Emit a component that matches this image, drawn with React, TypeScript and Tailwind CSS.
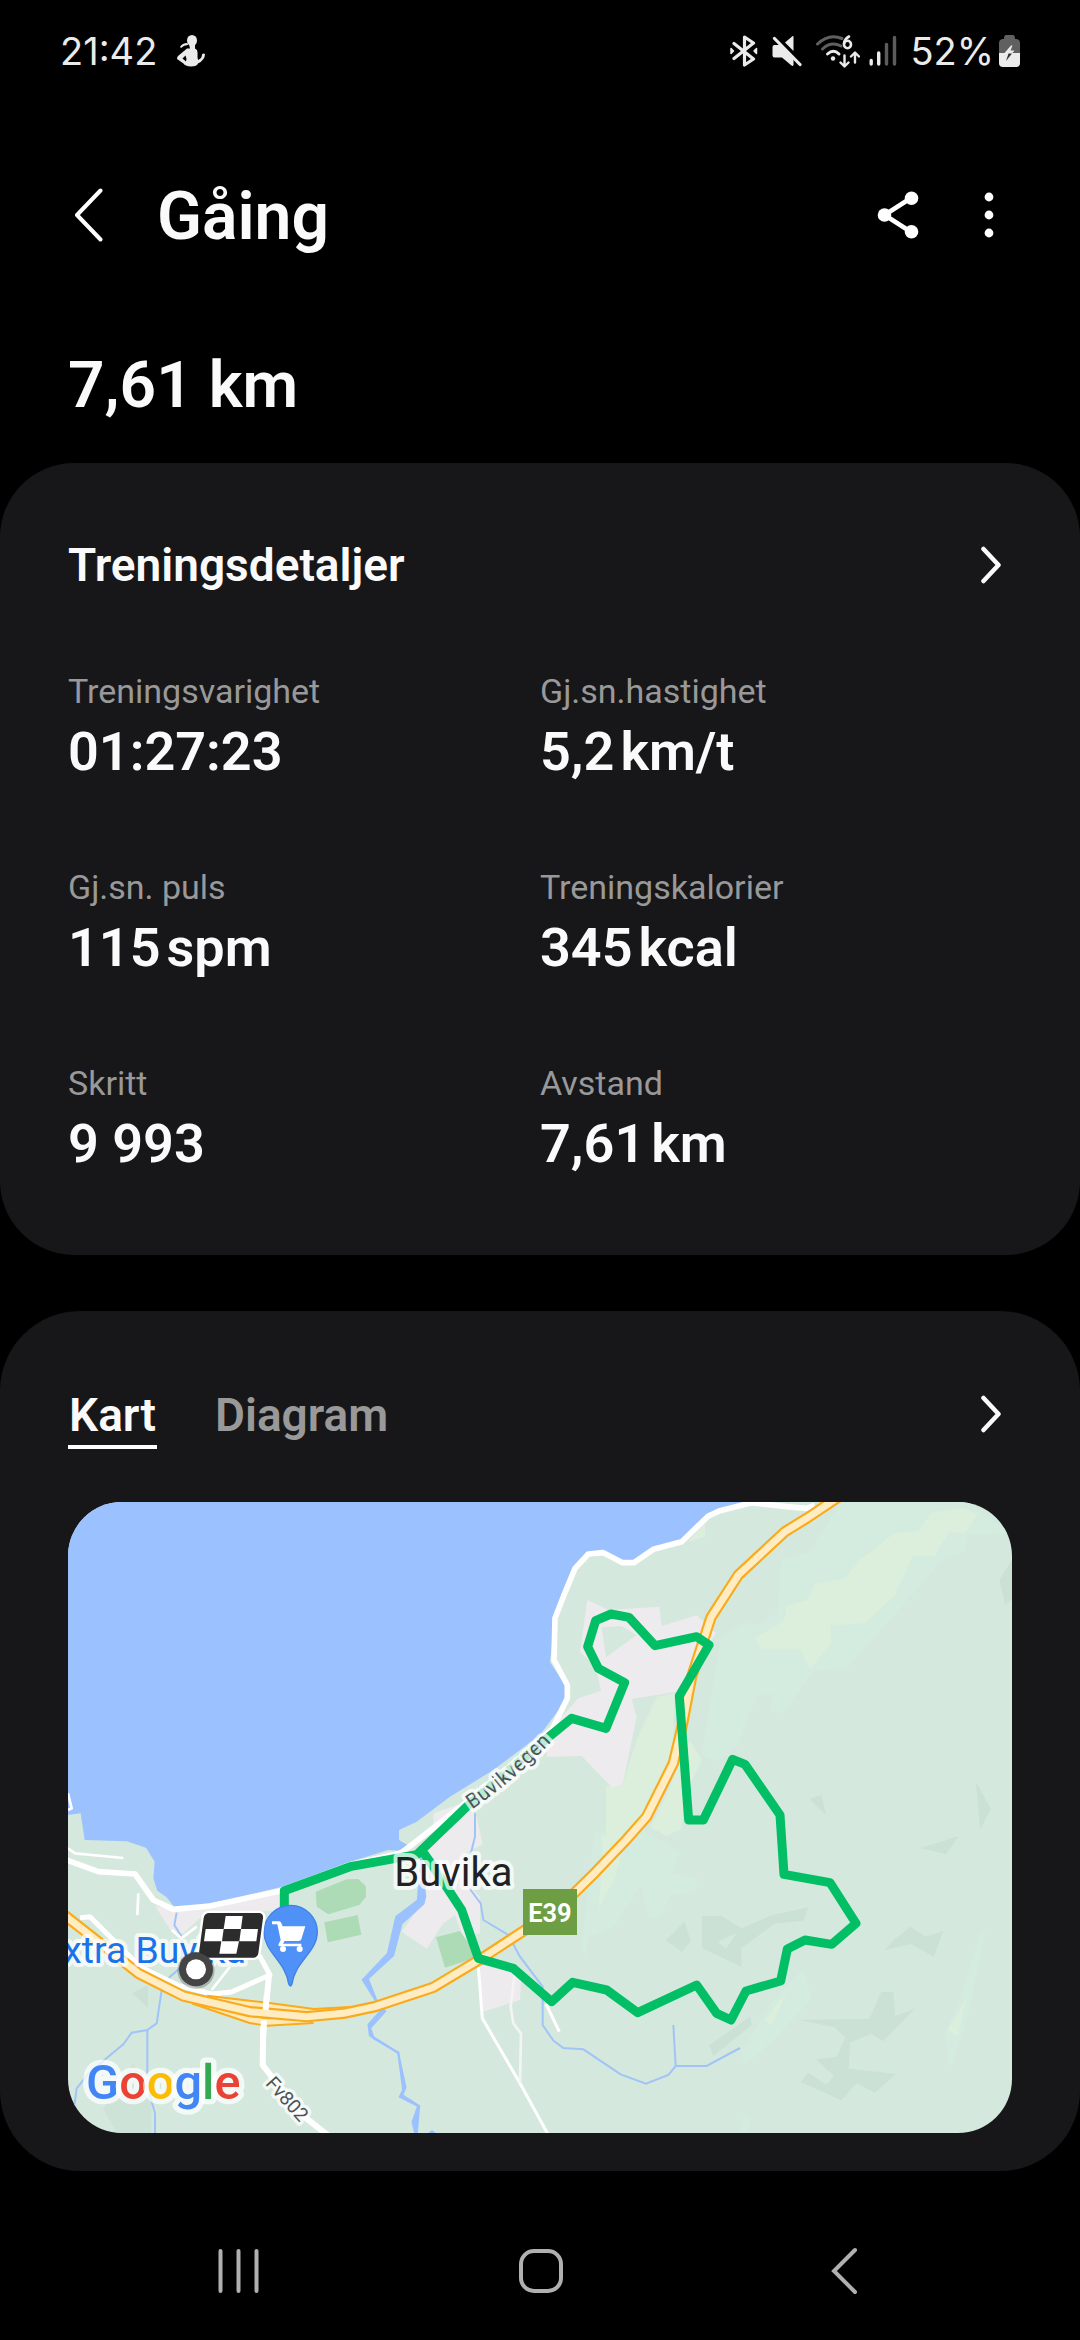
import { useState } from "react";

type Stat = { label: string; value: string; unit?: string };

const stats: Stat[] = [
  { label: "Treningsvarighet", value: "01:27:23" },
  { label: "Gj.sn.hastighet", value: "5,2", unit: "km/t" },
  { label: "Gj.sn. puls", value: "115", unit: "spm" },
  { label: "Treningskalorier", value: "345", unit: "kcal" },
  { label: "Skritt", value: "9 993" },
  { label: "Avstand", value: "7,61", unit: "km" },
];

const tabs = ["Kart", "Diagram"];

function StatusBar() {
  return (
    <div className="flex h-[102px] items-center justify-between px-[60px] font-['Inter',sans-serif] text-[38px] text-[#ebebeb]">
      <div className="flex items-center gap-5">
        <span>21:42</span>
        <svg width="28" height="32" viewBox="0 0 28 32" fill="#ebebeb">
          <ellipse cx="15" cy="5.500" rx="5" ry="5.500" />
          <path d="M3 12 Q5 8 10.500 8 L11 10 Q7 10 4 13Z" />
          <path
            fillRule="evenodd"
            d="M12 9h6v4.500l2 1.500q1 3 .5 7l.5 3q4-1.500 4-5.500 1-1.500 3-.5 0 6-7 9.500-1 3-7 3-6-.5-7.500-3L0 24q0-2 1-3l9-7.500h3zM5.500 23.500l3.500 3q1-3-.5-6z"
          />
        </svg>
      </div>

      <div className="flex items-center">
        {/* Bluetooth */}
        <svg width="28" height="32" viewBox="0 0 28 32" fill="none" stroke="#ebebeb" strokeWidth="3.200" strokeLinejoin="round" strokeLinecap="round">
          <path d="M4 8.500 L23.500 24 L14.500 30 V2 L23.500 8 L4 23.500" />
          <path d="M1 13.500v5l2.500-2.500zM26.500 13.500v5L24 16z" fill="#ebebeb" strokeWidth="1.500" />
        </svg>
        {/* Sound off */}
        <svg className="ml-[14px]" width="30" height="32" viewBox="0 0 30 32" fill="#ebebeb">
          <path d="M21.500 1.500V16L13 7.500 19.500 2Q21 .5 21.500 1.500z" />
          <path d="M2.500 10H8l13.500 14v6q-.5 1.500-2 .5L10 22.500H2.500Q.5 22.500.5 20.500V12q0-2 2-2z" />
          <path d="M6 3 L29 26" stroke="#000" strokeWidth="2" />
          <path d="M2.500 3.500 L28 29.500" stroke="#ebebeb" strokeWidth="3.200" strokeLinecap="round" />
        </svg>
        {/* Wi-Fi 6 */}
        <svg className="ml-[14px]" width="44" height="33" viewBox="0 0 44 33" fill="none" strokeLinecap="round">
          <path d="M1.500 9 Q13 -2 26 3.500" stroke="#606060" strokeWidth="3" />
          <path d="M6.500 14 Q15 6 25 11" stroke="#606060" strokeWidth="3" />
          <path d="M11.500 19 Q17.500 13.500 23 19" stroke="#ebebeb" strokeWidth="3" />
          <circle cx="17" cy="23.500" r="2.200" fill="#ebebeb" />
          <ellipse cx="31.500" cy="9.500" rx="3.500" ry="3.700" stroke="#ebebeb" strokeWidth="2.600" />
          <path d="M33 1.500 Q28.500 4 28 8.500" stroke="#ebebeb" strokeWidth="2.600" />
          <path d="M28.500 20.500v10M24.500 27.500l4 4 4-4M39 27.500V18M35 21.500l4-4 4 4" stroke="#ebebeb" strokeWidth="2.400" strokeLinejoin="round" />
        </svg>
        {/* Mobile signal */}
        <svg className="ml-[9px]" width="28" height="32" viewBox="0 0 28 32" strokeWidth="3.400" strokeLinecap="round">
          <path d="M2.200 25.500v3.500M9.700 18v11" stroke="#ebebeb" />
          <path d="M17.500 9.500V29M25.500 2.500V29" stroke="#5c5c5c" />
        </svg>
        <span className="ml-[13px]">52%</span>
        <svg className="ml-[5px]" width="21" height="32" viewBox="0 0 21 32">
          <path d="M7 0h7q2 0 2 4h1.500Q21 4.500 21 8v11H0V8q0-3.500 3.500-4H5q0-4 2-4z" fill="#606060" />
          <path d="M0 18h21v10q0 4-4 4H4q-4 0-4-4z" fill="#ebebeb" />
          <path d="M12 10.500 L5.500 18H10L7 25.500 15.500 15.500H11.500L13.500 10.500z" fill="#ebebeb" />
          <path d="M9.500 18.500H13L7 26z" fill="#333" />
        </svg>
      </div>
    </div>
  );
}

function ChevronRight() {
  return (
    <svg width="20" height="38" viewBox="0 0 20 38" fill="none" stroke="#fafafa" strokeWidth="4.500" strokeLinecap="round" strokeLinejoin="round">
      <path d="M2.500 3 L17.500 19 L2.500 35" />
    </svg>
  );
}

const ROUTE =
  "M649 1225 V1166 L846 1094 L1046 1058 L1196 914 L1300 825 L1446 702 L1511 649 L1614 679 L1670 542 L1591 499 L1559 434 L1583 356 L1629 336 L1683 346 L1761 431 L1886 404 L1923 429 L1834 582 L1862 954 L1906 954 L1994 772 L2031 787 L2136 939 L2148 1117 L2286 1142 L2364 1264 L2291 1327 L2211 1314 L2158 1341 L2138 1437 L2034 1467 L1989 1554 L1946 1534 L1886 1449 L1709 1532 L1616 1464 L1514 1441 L1451 1499 L1336 1399 L1231 1369 L1181 1224 L1096 1094 L1061 1044";

const HIGHWAY =
  "M2310 -14 L2216 49 L2151 89 L2011 219 L1929 346 L1871 524 L1841 679 L1816 784 L1736 944 L1676 1012 L1581 1112 L1516 1176 L1371 1284 L1241 1369 L1096 1456 L921 1514 L826 1534 L716 1544 L546 1529 L346 1482 L211 1414 L91 1319 L-10 1240";

const RAMPS =
  "M376 1494 L546 1552 L596 1560 L736 1552 M416 1492 L586 1512 L736 1532 L846 1526";

function RouteMap() {
  return (
    <svg viewBox="0 0 2832 1893" className="block h-auto w-full rounded-[54px]" role="img" aria-label="Kart over turen">
      <rect width="2832" height="1893" fill="#d5e8dd" />

      {/* Terrain */}
      <g fill="#d4ebdf">
        <path d="M2320 0 H2700 L2832 95 L2700 100 L2690 150 L2636 160 L2341 495 L2236 509 L2146 634 L2106 624 L2116 574 L2066 584 L2006 734 L1950 780 L1900 760 L1960 400 L2030 360 L2070 370 L2130 330 L2140 170 L2220 150 L2250 110 Z" />
        <path d="M1580 990 L1720 980 L1840 1050 L1810 1110 L1890 1130 L1880 1170 L1810 1180 L1770 1250 L1740 1245 L1720 1150 L1640 1270 L1560 1310 L1555 1370 L1540 1330 Z" />
        <path d="M2200 1404 L2215 1430 L2230 1490 L2110 1620 L2030 1690 L2020 1650 L2110 1500 Z" />
        <path d="M2740 1280 L2752 1290 L2700 1540 L2645 1705 L2630 1600 L2690 1450 Z" />
        <path d="M2030 1830 L2048 1870 L2035 1893 H2015 Z" />
      </g>
      <g fill="#dceedc">
        <path d="M2686 17 L2731 37 L2691 92 L2643 92 L2599 162 L2534 162 L2481 279 L2391 364 L2286 371 L2291 424 L2226 501 L2196 442 L2076 442 L2061 407 L2146 359 L2156 312 L2218 294 L2241 244 L2326 232 L2376 174 L2478 94 L2551 86 L2589 32 Z" />
        <path d="M1706 714 L1766 584 L1820 574 L1814 760 L1740 900 L1740 940 L1676 1000 L1640 1130 L1591 1224 L1605 1060 L1600 1005 L1614 1000 V854 L1664 846 Z" />
        <path d="M1866 714 L1901 774 L1850 880 L1841 980 L1796 1002 L1746 975 L1790 890 Z" />
        <path d="M1911 90 V64 L1860 120 L1914 103 Z" />
        <path d="M2157 1465 L2120 1555 L2108 1570 L2092 1552 Z M2695 1490 L2668 1605 L2638 1582 Z" />
      </g>
      <g fill="#cbe1d5">
        <path d="M1902 1242 H1960 L2022 1279 L2110 1240 L2222 1216 L2206 1256 L2120 1265 L2020 1338 V1394 L1902 1338 Z" />
        <path d="M1850 1258 L1868 1318 L1842 1350 L1794 1315 Z" />
        <path d="M2558 1038 L2672 1002 L2634 1057 Z M2528 1274 L2572 1304 L2626 1288 L2598 1364 L2528 1326 L2450 1344 L2480 1312 Z" />
        <path d="M2440 1469 H2476 L2482 1542 L2540 1520 L2446 1618 L2410 1595 L2346 1622 L2342 1700 L2484 1716 L2420 1772 L2366 1744 L2320 1795 L2198 1740 L2220 1712 L2274 1748 L2298 1722 L2244 1672 L2306 1664 L2332 1606 L2300 1576 L2192 1554 L2404 1550 Z" />
        <path d="M2832 174 L2794 234 L2812 308 L2832 290 Z M2724 840 L2769 920 L2736 984 Z M2224 890 L2260 880 L2274 938 Z" />
        <path d="M2046 1544 L2052 1568 L1936 1662 L1924 1630 Z M192 1474 L240 1450 V1518 Z" />
        <path d="M195 1684 L250 1760 V1893 H146 L106 1820 L160 1740 Z" opacity=".7" />
      </g>
      <path d="M2006 1293 L1974 1340 L1948 1320 Z" fill="#d5e8dd" />

      {/* Water */}
      <path
        d="M0 0 H2040 L1956 26 L1921 42 L1841 119 L1756 142 L1698 182 L1664 182 L1606 152 L1561 156 L1521 199 L1486 284 L1461 349 L1446 480 L1498 560 V589 L1416 699 L1276 804 L1146 884 L1046 959 L993 984 V1014 L1018 1029 L991 1046 L961 1044 L846 1079 L636 1156 L426 1206 L318 1214 L296 1186 L268 1166 L256 1129 L260 1079 L234 1037 L176 1018 L50 1014 L38 934 L0 939 Z"
        fill="#9bc1ff"
      />

      {/* Built-up areas */}
      <g fill="#eeebee">
        <path d="M1558 294 L1621 324 L1774 314 L1781 372 L1886 340 L1944 394 L1826 569 L1691 591 L1706 644 L1664 846 L1631 856 L1541 762 L1436 764 L1451 679 L1531 589 L1599 566 L1583 494 L1536 449 Z" />
        <path d="M261 1212 L318 1224 L636 1164 V1224 L406 1239 L346 1294 L311 1289 Z" />
        <path d="M1096 934 L1196 899 L1226 944 L1244 1027 L1180 1060 L1200 1150 L1236 1184 V1294 L1186 1309 L1161 1239 L1126 1264 L1076 1340 L1001 1289 L1076 1184 L1066 1044 L1096 994 Z" />
        <path d="M1226 1389 L1361 1404 L1356 1494 L1246 1529 Z" />
      </g>
      <path d="M1601 376 L1660 372 L1706 399 L1614 466 Z" fill="#d5e8dd" />
      <g fill="#addbb6">
        <path d="M743 1169 L836 1132 L871 1131 L893 1152 L894 1184 L874 1209 L781 1237 L746 1214 Z" />
        <path d="M769 1261 L869 1239 L880 1298 L779 1321 Z" />
        <path d="M1104 1306 L1176 1287 L1231 1364 L1131 1397 Z" />
      </g>

      {/* Streams */}
      <g fill="none" stroke="#a1c4f7" strokeWidth="6">
        <path d="M1221 934 V1004 L1206 1064 L1208 1164 L1238 1204 L1246 1254 L1321 1299 L1356 1364 L1424 1454 V1569 L1456 1616 L1486 1638 L1546 1642 L1658 1717 L1734 1745 L1801 1719 L1823 1692 H1916 L2016 1638 M1816 1569 L1823 1692" />
        <path d="M326 1232 L319 1269 L341 1304 V1394 L306 1424 L281 1464 L266 1564 L238 1584 L191 1592 L166 1627 L66 1709 L26 1759 L16 1834 M238 1584 V1754 L261 1834 V1893" />
      </g>
      <path
        d="M1060 1060 L1071 1184 L1066 1205 L1000 1265 L975 1360 L899 1430 L926 1498 L951 1528 L906 1578 L916 1608 L991 1652 L1006 1764 L996 1784 L1051 1812 L1034 1860 L1042 1893 H1046 L1053 1812 L1002 1780 L1012 1756 L990 1652 L906 1600 L902 1568 L941 1524 L885 1434 L960 1355 L985 1245 L1050 1195 Z"
        fill="#9bc1ff"
        stroke="#9bc1ff"
        strokeWidth="7"
      />
      <path d="M1080 1893 L1092 1884 L1104 1893 Z" fill="#9bc1ff" />

      {/* Local roads */}
      <g fill="none" stroke="#fff" strokeLinejoin="round">
        <path
          d="M2240 10 L2216 19 L2156 14 L2051 2 L1956 26 L1921 42 L1841 119 L1756 142 L1698 182 L1664 182 L1606 152 L1561 156 L1521 199 L1486 284 L1461 349 L1458 474 L1498 549 V589 L1454 679 L1300 818 L1196 900 L1001 1052 L846 1088 L636 1167 L426 1212 L316 1222 L256 1194 L201 1116 L91 1109 L-10 1072"
          strokeWidth="17"
        />
        <path d="M574 1360 L606 1419 L490 1470 L431 1476 L330 1450 L216 1394 L141 1319 L66 1244 L36 1247" strokeWidth="15" />
        <path d="M603 1419 L594 1514 L586 1564 L584 1689 L611 1724 L696 1834 L780 1900" strokeWidth="18" />
        <path d="M486 1394 L431 1464 M311 1284 L340 1309 L386 1274 M211 1174 L208 1239 M0 1039 L21 1054 L166 1068 M0 874 L11 919 L0 924" strokeWidth="8" />
        <path d="M1231 1395 L1243 1549 L1356 1744 L1440 1897 M1434 1506 L1474 1589" strokeWidth="9" />
        <path d="M1341 1410 L1328 1514 L1336 1564 L1359 1594 L1356 1744" stroke="#f4f4f4" strokeWidth="8" />
      </g>

      {/* E39 */}
      <g fill="none" strokeLinejoin="round">
        <path d={RAMPS} stroke="#f9ab1c" strokeWidth="28" />
        <path d={RAMPS} stroke="#ffe9b8" strokeWidth="16" />
        <path d={HIGHWAY} stroke="#f9ab1c" strokeWidth="34" />
        <path d={HIGHWAY} stroke="#ffecc2" strokeWidth="21" />
        <path d="M596 1480 L593 1524 M588 1555 L586 1600" stroke="#fff" strokeWidth="18" />
      </g>

      <path d={ROUTE} fill="none" stroke="#02bf66" strokeWidth="27" strokeLinejoin="round" />

      {/* Labels */}
      <defs>
        <path id="buvikvegen" d="M1212 922 Q1350 830 1478 690" />
      </defs>
      <g className="font-['Roboto',sans-serif]" stroke="#fff" strokeOpacity=".72" strokeLinejoin="round" style={{ paintOrder: "stroke" }}>
        <text fontSize="62" fill="#4c5358" strokeWidth="22">
          <textPath href="#buvikvegen">Buvikvegen</textPath>
        </text>
        <text fontSize="58" fill="#4c5358" strokeWidth="20" transform="translate(590 1746) rotate(48)">
          Fv802
        </text>
        <text x="979" y="1152" fontSize="120" fill="#1f2124" strokeWidth="24">
          Buvika
        </text>
        <text x="-14" y="1384" fontSize="112" fill="#1a73e8" strokeWidth="24">
          xtra Buvika
        </text>
        <text x="54" y="1791" fontSize="146" fontWeight="500" strokeWidth="32">
          <tspan fill="#4285f4">G</tspan>
          <tspan fill="#ea4335">o</tspan>
          <tspan fill="#fbbc05">o</tspan>
          <tspan fill="#4285f4">g</tspan>
          <tspan fill="#34a853">l</tspan>
          <tspan fill="#ea4335">e</tspan>
        </text>
      </g>
      <rect x="1365" y="1161" width="162" height="138" fill="#6d9e43" />
      <text x="1446" y="1260" fontSize="76" fontWeight="700" fill="#fff" textAnchor="middle" className="font-['Roboto',sans-serif]">
        E39
      </text>

      {/* Shop pin */}
      <path
        d="M668 1210 a80 80 0 0 1 80 80 C748 1350 680 1380 672 1446 Q668 1458 662 1446 C654 1380 588 1350 588 1290 a80 80 0 0 1 80-80z"
        fill="#4f91f6"
        stroke="#3f82e6"
        strokeWidth="4"
      />
      <g fill="#fff">
        <path d="M612 1258 H634 Q638 1258 640 1264 L644 1273 H712 L700 1312 Q698 1317 692 1317 H650 L645 1325 H700 V1333 H636 Q628 1332 633 1324 L638 1314 L628 1267 H612Z" />
        <circle cx="645" cy="1341" r="9" />
        <circle cx="695" cy="1341" r="9" />
      </g>

      {/* Finish flag */}
      <path d="M424 1237 H572 Q583 1237 581 1248 L567 1354 Q565 1363 556 1363 H405 Q395 1363 397 1352 L411 1248 Q413 1237 424 1237z" fill="#2c2c2c" stroke="#fff" strokeWidth="22" />
      <path d="M424 1237 H572 Q583 1237 581 1248 L567 1354 Q565 1363 556 1363 H405 Q395 1363 397 1352 L411 1248 Q413 1237 424 1237z" fill="#2c2c2c" stroke="#2c2c2c" strokeWidth="8" />
      <path
        d="M473 1242 h51 l-5 39 h-52z M413 1281 h54 l-5 37 h-54z M519 1281 h51 l-5 37 h-51z M460 1318 h53 l-8 37 h-51z"
        fill="#fff"
      />

      {/* End point */}
      <circle cx="384" cy="1405" r="56" fill="#000" opacity=".22" />
      <circle cx="384" cy="1402" r="51" fill="#444" />
      <circle cx="384" cy="1402" r="30" fill="#fff" />
    </svg>
  );
}

export default function App() {
  const [activeTab, setActiveTab] = useState("Kart");

  return (
    <div className="min-h-screen bg-black font-['Roboto',sans-serif] text-[#fafafa]">
      <StatusBar />

      {/* Header */}
      <header className="flex h-[226px] items-center pl-[73px] pr-[83px]">
        <button type="button" aria-label="Tilbake">
          <svg width="30" height="54" viewBox="0 0 30 54" fill="none" stroke="#fff" strokeWidth="4" strokeLinecap="round" strokeLinejoin="round">
            <path d="M27.500 2.500 L4 27 L27.500 51.500" />
          </svg>
        </button>
        <h1 className="ml-[54px] mt-1 text-[66px] font-semibold leading-[76px]">Gåing</h1>
        <div className="ml-auto flex items-center gap-[62px]">
          <button type="button" aria-label="Del">
            <svg width="42" height="48" viewBox="0 0 42 48" fill="#fff">
              <path d="M34 7 L7.500 24 L34 41" fill="none" stroke="#fff" strokeWidth="4.600" />
              <circle cx="7.500" cy="24" r="6.800" />
              <circle cx="34.500" cy="7.300" r="6.800" />
              <circle cx="34.500" cy="40.700" r="6.800" />
            </svg>
          </button>
          <button type="button" aria-label="Flere valg">
            <svg width="16" height="48" viewBox="0 0 16 48" fill="#fff">
              <circle cx="8" cy="6" r="4.400" />
              <circle cx="8" cy="24" r="4.400" />
              <circle cx="8" cy="42" r="4.400" />
            </svg>
          </button>
        </div>
      </header>

      <main>
        <p className="px-[68px] pb-[19px] text-[64px] font-semibold leading-[116px]">7,61 km</p>

        {/* Workout details */}
        <section className="rounded-[74px] bg-[#171719] px-[68px] pb-[79px] pt-[72px]">
          <button type="button" className="flex h-[60px] w-full items-center justify-between pr-[11px]">
            <h2 className="text-[46px] font-semibold">Treningsdetaljer</h2>
            <ChevronRight />
          </button>
          <dl className="mt-[75px] grid grid-cols-2 gap-y-[82px]">
            {stats.map((s) => (
              <div key={s.label}>
                <dt className="text-[34px] leading-[42px] text-[#999]">{s.label}</dt>
                <dd className="mt-2 flex gap-1.5 text-[54px] font-semibold leading-[64px]">
                  <span>{s.value}</span>
                  {s.unit && <span>{s.unit}</span>}
                </dd>
              </div>
            ))}
          </dl>
        </section>

        {/* Map */}
        <section className="mt-14 rounded-[80px] bg-[#171719] px-[68px] pb-[38px] pt-[74px]">
          <div className="flex items-start justify-between pr-[11px]">
            <div role="tablist" className="flex gap-[57px] text-[46px] font-semibold leading-[60px]">
              {tabs.map((tab) => (
                <button
                  key={tab}
                  type="button"
                  role="tab"
                  aria-selected={tab === activeTab}
                  onClick={() => setActiveTab(tab)}
                  className={
                    tab === activeTab
                      ? "border-b-4 border-white px-px text-[#fafafa]"
                      : "border-b-4 border-transparent px-px text-[#999]"
                  }
                >
                  {tab}
                </button>
              ))}
            </div>
            <button type="button" aria-label="Vis kart" className="flex h-[58px] items-center">
              <ChevronRight />
            </button>
          </div>
          <div className="mt-[53px]">
            <RouteMap />
          </div>
        </section>
      </main>

      {/* System navigation */}
      <nav className="mt-[70px] grid grid-cols-3 justify-items-center px-[87px] pb-9">
        <button type="button" aria-label="Nylige apper">
          <svg width="60" height="60" viewBox="0 0 60 60" stroke="#b0b0b0" strokeWidth="4" strokeLinecap="round">
            <path d="M12.500 10v40M30.500 10v40M48.500 10v40" />
          </svg>
        </button>
        <button type="button" aria-label="Hjem">
          <svg width="60" height="60" viewBox="0 0 60 60" fill="none" stroke="#b0b0b0" strokeWidth="4">
            <rect x="11" y="10" width="40" height="40" rx="13" />
          </svg>
        </button>
        <button type="button" aria-label="Tilbake">
          <svg width="60" height="60" viewBox="0 0 60 60" fill="none" stroke="#b0b0b0" strokeWidth="4" strokeLinecap="round">
            <path d="M43 9 L22 30 L43 51" />
          </svg>
        </button>
      </nav>
    </div>
  );
}
